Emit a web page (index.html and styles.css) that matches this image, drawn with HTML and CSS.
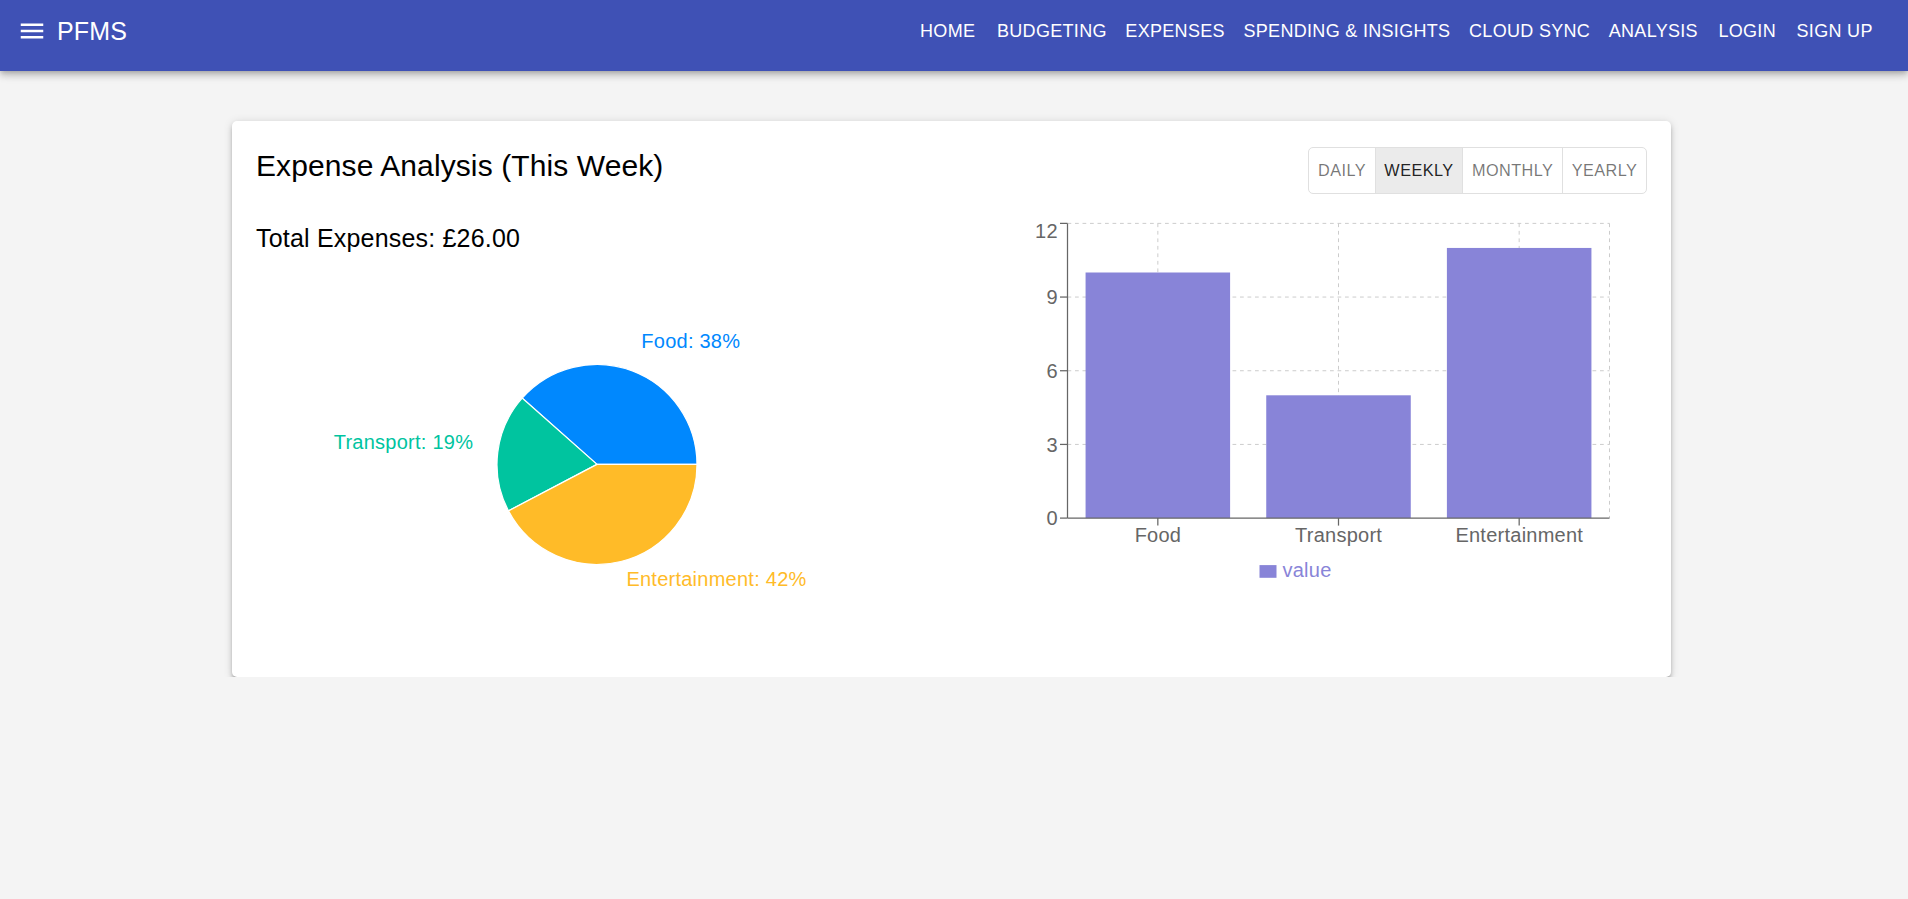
FILE: index.html
```html
<!DOCTYPE html>
<html lang="en">
<head>
<meta charset="utf-8">
<title>PFMS - Expense Analysis</title>
<link rel="stylesheet" href="styles.css">
</head>
<body>
<header class="appbar">
  <div class="toolbar">
    <div class="brand">
      <svg class="menu-icon" viewBox="0 0 24 24" aria-hidden="true"><path fill="#fff" d="M3 18h18v-2H3v2zm0-5h18v-2H3v2zm0-7v2h18V6H3z"/></svg>
      <span class="brand-name">PFMS</span>
    </div>
    <nav class="nav">
      <a class="nav-btn">HOME</a>
      <a class="nav-btn">BUDGETING</a>
      <a class="nav-btn">EXPENSES</a>
      <a class="nav-btn">SPENDING &amp; INSIGHTS</a>
      <a class="nav-btn">CLOUD SYNC</a>
      <a class="nav-btn">ANALYSIS</a>
      <a class="nav-btn">LOGIN</a>
      <a class="nav-btn">SIGN UP</a>
    </nav>
  </div>
</header>

<main class="main">
  <section class="card">
    <div class="card-header">
      <h1 class="title">Expense Analysis (This Week)</h1>
      <div class="toggle">
        <span class="toggle-btn">DAILY</span>
        <span class="toggle-btn selected">WEEKLY</span>
        <span class="toggle-btn">MONTHLY</span>
        <span class="toggle-btn">YEARLY</span>
      </div>
    </div>
    <div class="columns">
      <div class="col">
        <h2 class="total">Total Expenses: £26.00</h2>
        <svg class="pie" width="680" height="395" viewBox="0 0 680 395">
          <path d="M341,206.4 L441,206.4 A100,100 0 0,0 266.15,140.09 Z" fill="#0088FE" stroke="#fff" stroke-width="1.25"/>
          <path d="M341,206.4 L266.15,140.09 A100,100 0 0,0 252.45,252.87 Z" fill="#00C49F" stroke="#fff" stroke-width="1.25"/>
          <path d="M341,206.4 L252.45,252.87 A100,100 0 0,0 441,206.4 Z" fill="#FFBB28" stroke="#fff" stroke-width="1.25"/>
          <text class="chart-text" x="385.3" y="89.5" fill="#0088FE" text-anchor="start">Food: 38%</text>
          <text class="chart-text" x="217.2" y="191.3" fill="#00C49F" text-anchor="end">Transport: 19%</text>
          <text class="chart-text" x="370.4" y="328" fill="#FFBB28" text-anchor="start">Entertainment: 42%</text>
        </svg>
      </div>
      <div class="col">
        <svg class="bars" width="680" height="372" viewBox="0 0 680 372">
          <g stroke="#ccc" stroke-dasharray="3.75 3.75" fill="none">
            <line x1="100.5" y1="5.38" x2="642.5" y2="5.38"/>
            <line x1="100.5" y1="79.06" x2="642.5" y2="79.06"/>
            <line x1="100.5" y1="152.74" x2="642.5" y2="152.74"/>
            <line x1="100.5" y1="226.42" x2="642.5" y2="226.42"/>
            <line x1="190.83" y1="5.38" x2="190.83" y2="300.1"/>
            <line x1="371.5" y1="5.38" x2="371.5" y2="300.1"/>
            <line x1="552.17" y1="5.38" x2="552.17" y2="300.1"/>
            <line x1="642.5" y1="5.38" x2="642.5" y2="300.1"/>
          </g>
          <rect x="118.57" y="54.5" width="144.53" height="245.6" fill="#8884d8"/>
          <rect x="299.24" y="177.3" width="144.53" height="122.8" fill="#8884d8"/>
          <rect x="479.9" y="29.94" width="144.53" height="270.16" fill="#8884d8"/>
          <g stroke="#666" fill="none" stroke-width="1.25">
            <line x1="100.5" y1="5.38" x2="100.5" y2="300.1"/>
            <line x1="100.5" y1="300.1" x2="642.5" y2="300.1"/>
            <line x1="93" y1="5.38" x2="100.5" y2="5.38"/>
            <line x1="93" y1="79.06" x2="100.5" y2="79.06"/>
            <line x1="93" y1="152.74" x2="100.5" y2="152.74"/>
            <line x1="93" y1="226.42" x2="100.5" y2="226.42"/>
            <line x1="93" y1="300.1" x2="100.5" y2="300.1"/>
            <line x1="190.83" y1="300.1" x2="190.83" y2="307.6"/>
            <line x1="371.5" y1="300.1" x2="371.5" y2="307.6"/>
            <line x1="552.17" y1="300.1" x2="552.17" y2="307.6"/>
          </g>
          <g class="chart-text" fill="#666" text-anchor="end">
            <text x="90.8" y="20.4">12</text>
            <text x="90.8" y="86.2">9</text>
            <text x="90.8" y="159.9">6</text>
            <text x="90.8" y="233.6">3</text>
            <text x="90.8" y="307.25">0</text>
          </g>
          <g class="chart-text" fill="#666" text-anchor="middle">
            <text x="190.95" y="324">Food</text>
            <text x="371.6" y="324">Transport</text>
            <text x="552.3" y="324">Entertainment</text>
          </g>
          <rect x="292.5" y="347.1" width="17" height="12.7" fill="#8884d8"/>
          <text class="chart-text" x="315.5" y="358.8" fill="#8884d8">value</text>
        </svg>
      </div>
    </div>
  </section>
</main>
</body>
</html>
```

FILE: styles.css
```css
* { box-sizing: border-box; }

html, body {
  margin: 0;
  padding: 0;
}

body {
  background: #f4f4f4;
  font-family: "Liberation Sans", Arial, sans-serif;
  color: #000;
}

.appbar {
  height: 71px;
  background: #3f51b5;
  color: #fff;
  box-shadow: 0 2.5px 5px -1.25px rgba(0,0,0,.2), 0 5px 6.25px 0 rgba(0,0,0,.14), 0 1.25px 12.5px 0 rgba(0,0,0,.12);
  position: relative;
  z-index: 2;
}

.toolbar {
  height: 62px;
  display: flex;
  align-items: center;
  justify-content: space-between;
  padding: 0 26px 0 17px;
}

.brand {
  display: flex;
  align-items: center;
}

.menu-icon {
  width: 30px;
  height: 30px;
  display: block;
}

.brand-name {
  margin-left: 10px;
  font-size: 25px;
  letter-spacing: 0.2px;
  line-height: 1;
}

.nav {
  display: flex;
  align-items: center;
  padding-top: 1px;
}

.nav-btn {
  display: block;
  min-width: 80px;
  padding: 0 9.3px;
  text-align: center;
  font-size: 18px;
  letter-spacing: 0.31px;
  line-height: 1.75;
  color: #fff;
  white-space: nowrap;
}

.main {
  display: flex;
  justify-content: center;
  padding-right: 5px;
}

.card {
  width: 1439px;
  margin-top: 50px;
  background: #fff;
  border-radius: 5px;
  padding: 26px 24px 24px 24px;
  box-shadow: 0 3.75px 3.75px -2.5px rgba(0,0,0,.24), 0 3.75px 5px 0 rgba(0,0,0,.16), 0 1.25px 10px 0 rgba(0,0,0,.12);
}

.card-header {
  display: flex;
  justify-content: space-between;
  align-items: flex-start;
}

.title {
  margin: 0;
  font-size: 30px;
  font-weight: 400;
  line-height: 38px;
  letter-spacing: 0.1px;
}

.toggle {
  display: flex;
  height: 47px;
  border: 1px solid #e0e0e0;
  border-radius: 5px;
  overflow: hidden;
}

.toggle-btn {
  display: flex;
  align-items: center;
  padding: 0 8.65px;
  font-size: 16.25px;
  letter-spacing: 0.46px;
  color: rgba(0,0,0,.54);
  border-left: 1px solid #e0e0e0;
}

.toggle-btn:first-child {
  border-left: none;
}

.toggle-btn.selected {
  background: #ebebeb;
  color: rgba(0,0,0,.87);
}

.columns {
  margin-top: 23.6px;
  display: grid;
  grid-template-columns: 1fr 1fr;
  column-gap: 30px;
}

.col {
  min-width: 0;
}

.total {
  margin: 0;
  font-size: 25px;
  font-weight: 400;
  line-height: 40px;
  letter-spacing: 0.19px;
}

.pie, .bars {
  display: block;
  overflow: visible;
}

.chart-text {
  font-size: 20px;
  letter-spacing: 0.25px;
  font-family: "Liberation Sans", Arial, sans-serif;
}
```
